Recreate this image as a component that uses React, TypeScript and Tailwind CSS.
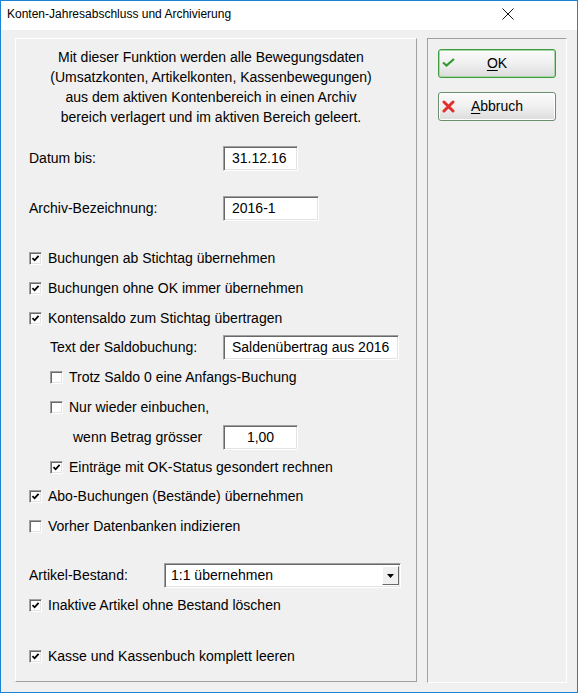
import React from "react";

const sunken =
  "border border-t-[#a0a0a0] border-l-[#a0a0a0] border-r-white border-b-white shadow-[inset_1px_1px_0_#696969,inset_-1px_-1px_0_#e3e3e3] bg-white";

function Check({ checked }: { checked: boolean }) {
  return (
    <div className={`w-[13px] h-[13px] shrink-0 flex items-center justify-center ${sunken}`}>
      {checked && (
        <svg width="9" height="9" viewBox="0 0 9 9">
          <path d="M1.5 4.2 L3.6 6.3 L7.6 1.8" stroke="#000" strokeWidth="1.8" fill="none" />
        </svg>
      )}
    </div>
  );
}

function CheckRow({
  checked,
  label,
  indent = false,
  h = "h-[30px]",
}: {
  checked: boolean;
  label: string;
  indent?: boolean;
  h?: string;
}) {
  return (
    <div className={`flex items-center ${h} ${indent ? "pl-[34px]" : "pl-[13px]"}`}>
      <Check checked={checked} />
      <span className="ml-[6px]">{label}</span>
    </div>
  );
}

function Field({ value, w, center = false }: { value: string; w: string; center?: boolean }) {
  return (
    <div className={`h-[25px] ${w} ${sunken} flex items-center ${center ? "justify-center" : "pl-[8px]"}`}>
      {value}
    </div>
  );
}

function Button({
  label,
  accel,
  icon,
  primary,
}: {
  label: string;
  accel: string;
  icon: React.ReactNode;
  primary?: boolean;
}) {
  const rest = label.slice(1);
  return (
    <div
      className={`relative h-[29px] w-[118px] rounded-[3px] border flex items-center justify-center bg-gradient-to-b from-[#fbfbfb] via-[#f0f0f0] to-[#dcdcdc] ${
        primary
          ? "border-[#3f9b3f] shadow-[inset_0_0_0_1px_#a8d8a8]"
          : "border-[#6b8f6b] shadow-[inset_0_0_0_1px_#ffffff]"
      }`}
    >
      <div className="absolute left-[3px] top-[7px]">{icon}</div>
      <span>
        <span className="underline underline-offset-[2px]">{accel}</span>
        {rest}
      </span>
    </div>
  );
}

export default function App() {
  return (
    <div
      className="w-[578px] h-[693px] border border-[#1883d7] bg-[#f0f0f0] flex flex-col text-[14px] text-black"
      style={{ fontFamily: '"Liberation Sans", Arial, sans-serif' }}
    >
      {/* title bar */}
      <div className="h-[29px] bg-white flex items-center justify-between shrink-0">
        <span className="ml-[6px] text-[12px] mt-[-4px]">Konten-Jahresabschluss und Archivierung</span>
        <svg width="12" height="12" viewBox="0 0 12 12" className="mr-[63px] mt-[-4px]">
          <path d="M0.5 0.5 L11.5 11.5 M11.5 0.5 L0.5 11.5" stroke="#111" strokeWidth="1" />
        </svg>
      </div>

      <div className="flex pt-[8px] pl-[14px]">
        {/* settings panel */}
        <div className="w-[402px] h-[644px] border border-t-white border-l-white border-r-[#a0a0a0] border-b-[#a0a0a0]">
          <div className="pt-[8px] text-center leading-[20px] pr-[10px]">
            <div>Mit dieser Funktion werden alle Bewegungsdaten</div>
            <div>(Umsatzkonten, Artikelkonten, Kassenbewegungen)</div>
            <div>aus dem aktiven Kontenbereich in einen Archiv</div>
            <div>bereich verlagert und im aktiven Bereich geleert.</div>
          </div>

          <div className="mt-[19px] flex items-center h-[25px] pl-[13px]">
            <span className="w-[194px]">Datum bis:</span>
            <Field value="31.12.16" w="w-[75px]" />
          </div>
          <div className="mt-[25px] flex items-center h-[25px] pl-[13px]">
            <span className="w-[194px]">Archiv-Bezeichnung:</span>
            <Field value="2016-1" w="w-[96px]" />
          </div>

          <div className="mt-[22px]">
            <CheckRow checked label="Buchungen ab Stichtag übernehmen" />
            <CheckRow checked label="Buchungen ohne OK immer übernehmen" />
            <CheckRow checked label="Kontensaldo zum Stichtag übertragen" />
            <div className="flex items-center h-[29px] pl-[34px]">
              <span className="w-[173px]">Text der Saldobuchung:</span>
              <Field value="Saldenübertrag aus 2016" w="w-[176px]" />
            </div>
            <CheckRow indent checked={false} label="Trotz Saldo 0 eine Anfangs-Buchung" />
            <CheckRow indent checked={false} label="Nur wieder einbuchen," />
            <div className="flex items-center h-[30px] pl-[57px]">
              <span className="w-[150px]">wenn Betrag grösser</span>
              <Field value="1,00" w="w-[75px]" center />
            </div>
            <CheckRow indent checked label="Einträge mit OK-Status gesondert rechnen" />
            <CheckRow checked label="Abo-Buchungen (Bestände) übernehmen" h="h-[29px]" />
            <CheckRow checked={false} label="Vorher Datenbanken indizieren" />
          </div>

          <div className="mt-[22px] flex items-center h-[25px] pl-[13px]">
            <span className="w-[135px]">Artikel-Bestand:</span>
            <div className={`h-[25px] w-[237px] ${sunken} flex items-center justify-between`}>
              <span className="pl-[6px]">1:1 übernehmen</span>
              <div className="mr-[1px] w-[17px] h-[19px] bg-[#f0f0f0] border border-t-white border-l-white border-r-[#696969] border-b-[#696969] flex items-center justify-center">
                <svg width="7" height="4" viewBox="0 0 7 4">
                  <path d="M0 0 H7 L3.5 4 Z" fill="#000" />
                </svg>
              </div>
            </div>
          </div>
          <div className="mt-[2px]">
            <CheckRow checked label="Inaktive Artikel ohne Bestand löschen" />
          </div>
          <div className="mt-[21px]">
            <CheckRow checked label="Kasse und Kassenbuch komplett leeren" />
          </div>
        </div>

        {/* action panel */}
        <div className="ml-[10px] w-[140px] h-[645px] border border-t-[#a0a0a0] border-l-[#a0a0a0] border-r-white border-b-white pt-[10px] pl-[10px] flex flex-col gap-[14px]">
          <Button
            primary
            label="OK"
            accel="O"
            icon={
              <svg width="13" height="11" viewBox="0 0 13 11">
                <path d="M1 5.5 L4.5 8.5 L12 2" stroke="#2f9a2f" strokeWidth="2.2" fill="none" />
              </svg>
            }
          />
          <Button
            label="Abbruch"
            accel="A"
            icon={
              <svg width="13" height="13" viewBox="0 0 13 13">
                <path d="M2 2 L11 11 M11 2 L2 11" stroke="#e0302a" strokeWidth="3" strokeLinecap="round" />
              </svg>
            }
          />
        </div>
      </div>
    </div>
  );
}
